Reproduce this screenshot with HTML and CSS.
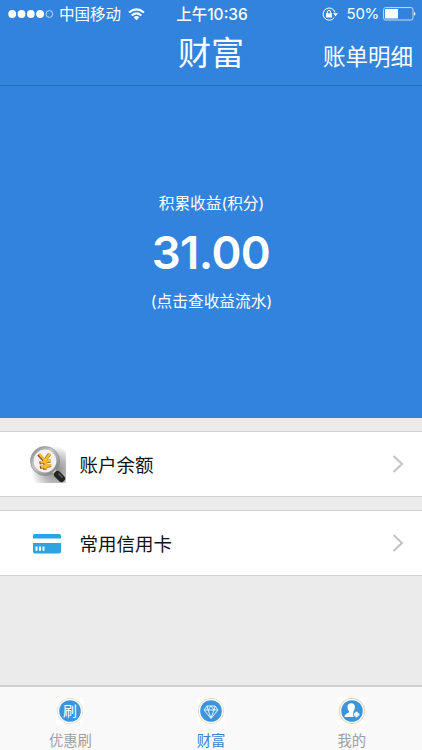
FILE: index.html
```
<!DOCTYPE html>
<html lang="zh-CN">
<head>
  <meta charset="UTF-8">
  <meta name="viewport" content="width=device-width, initial-scale=1.0">
  <title>财富</title>
  <link rel="stylesheet" href="styles.css">
</head>
<body>
  <header class="header">
    <div class="status-bar">
      <div class="status-left">
        <svg class="signal" width="46" height="10" viewBox="0 0 46 10">
          <circle cx="4.2" cy="5" r="3.9"/>
          <circle cx="13.5" cy="5" r="3.9"/>
          <circle cx="22.8" cy="5" r="3.9"/>
          <circle cx="32.1" cy="5" r="3.9"/>
          <circle cx="41.4" cy="5" r="3.4" class="signal-empty"/>
        </svg>
        <span class="carrier">中国移动</span>
        <svg class="wifi" width="17" height="13" viewBox="0 0 17 13">
          <path d="M1 4.6 Q8.5 -1.8 16 4.6 M3.7 7.4 Q8.5 3.3 13.3 7.4" fill="none" stroke="#fff" stroke-width="2"/>
          <path d="M5.6 9.2 Q8.5 6.8 11.4 9.2 L8.5 12.3z" fill="#fff"/>
        </svg>
      </div>
      <span class="time">上午10:36</span>
      <div class="status-right">
        <svg class="lock" width="17" height="14" viewBox="0 0 17 14">
          <path d="M12.3 10.5 A6.1 6.1 0 1 1 13.1 5.5" fill="none" stroke="#fff" stroke-width="1"/>
          <path d="M11 6.3h5l-2.5 3z M4 6.3h6v4.2h-6z" fill="#fff"/>
          <path d="M5.3 6.5v-1.3a1.7 1.7 0 0 1 3.4 0v1.3" fill="none" stroke="#fff" stroke-width="1"/>
        </svg>
        <span class="percent">50%</span>
        <svg width="33" height="14" viewBox="0 0 33 14">
          <rect x=".6" y=".6" width="29.4" height="12.4" rx="2" fill="none" stroke="#c5def7"/>
          <path d="M2 2h13v9.6h-13z M31 4.8q3 2 0 4z" fill="#fff"/>
        </svg>
      </div>
    </div>
    <div class="nav-bar">
      <h1>财富</h1>
      <a class="detail">账单明细</a>
    </div>
  </header>

  <section class="income">
    <p class="income-label">积累收益(积分)</p>
    <p class="income-value">31.00</p>
    <p class="income-tip">(点击查收益流水)</p>
  </section>

  <main class="list">
    <a class="row">
      <svg class="row-icon" width="38" height="38" viewBox="0 0 38 38">
        <defs>
          <radialGradient id="shade" cx=".72" cy=".68" r=".66">
            <stop offset="0" stop-color="#888"/>
            <stop offset=".5" stop-color="#bbb"/>
            <stop offset="1" stop-color="#fff"/>
          </radialGradient>
          <linearGradient id="rim" x1="0" y1="0" x2="1" y2="1">
            <stop offset="0" stop-color="#888"/>
            <stop offset=".4" stop-color="#c9c9c9"/>
            <stop offset="1" stop-color="#777"/>
          </linearGradient>
        </defs>
        <rect width="37" height="38" fill="url(#shade)"/>
        <path d="M0 0h38v8L30 0z" fill="#fff"/>
        <circle cx="16" cy="16" r="13" fill="#f3f1f2" stroke="url(#rim)" stroke-width="3.2"/>
        <circle cx="16" cy="16" r="14.6" fill="none" stroke="#888" stroke-width=".6"/>
        <path d="M9.5 9.5l6 6.5 5-7M16 16v9M10.5 18l11-2M11 22.500l11-2" fill="none" stroke="#8a451c" stroke-width="3.3"/>
        <path d="M10.5 9l5.5 6.5 5-7M16.5 15v9.500M11.5 17.5l10.5-2M12 22l10.5-2" fill="none" stroke="#f7bd32" stroke-width="2.5"/>
        <path d="M25 26l3 3" stroke="#cbc8ac" stroke-width="4"/>
        <path d="M28.500 29.500l4 4" stroke="#202423" stroke-width="7" stroke-linecap="round"/>
        <path d="M29.500 28.500l4 4" stroke="#5d6563" stroke-width="1.2"/>
      </svg>
      <span class="row-text">账户余额</span>
      <svg class="arrow" width="12" height="18" viewBox="0 0 12 18"><path d="M1.5 1l8.5 8-8.5 8"/></svg>
    </a>
    <a class="row">
      <svg class="row-icon" width="38" height="38" viewBox="0 0 38 38">
        <path d="M4 14.5V11.8q0-1.8 1.8-1.8h24.4q1.8 0 1.8 1.8V14.500zM4 19h28v8.7q0 1.8-1.8 1.8H5.8Q4 29.5 4 27.7z" fill="#2da4df"/>
        <path d="M7.5 22.5v4.2M11 22.5v4.2M14.5 22.5v4.2" stroke="#fff" stroke-width="2"/>
      </svg>
      <span class="row-text">常用信用卡</span>
      <svg class="arrow" width="12" height="18" viewBox="0 0 12 18"><path d="M1.5 1l8.5 8-8.5 8"/></svg>
    </a>
  </main>

  <nav class="tab-bar">
    <a class="tab">
      <svg width="28" height="28" viewBox="0 0 28 28">
        <rect x=".5" y=".5" width="27" height="27" fill="#fff"/>
        <circle cx="14" cy="14" r="12.7" fill="#fff" stroke="#e0e0d8"/>
        <circle cx="14" cy="14" r="10.8" fill="#3c94da"/>
        <text x="14" y="19" text-anchor="middle" class="tab-glyph">刷</text>
      </svg>
      <span>优惠刷</span>
    </a>
    <a class="tab active">
      <svg width="28" height="28" viewBox="0 0 28 28">
        <rect x=".5" y=".5" width="27" height="27" fill="#fff"/>
        <circle cx="14" cy="14" r="12.7" fill="#fff" stroke="#dddcc4"/>
        <circle cx="14" cy="14" r="10.8" fill="#3c94da"/>
        <path d="M10 9h8l3 4-7 8.5L7 13zM7 13h14M10 9l1 4 3 8 3-8 1-4M11 13l3-4 3 4" fill="none" stroke="#e4f4ff" stroke-width="1" stroke-linejoin="round"/>
      </svg>
      <span>财富</span>
    </a>
    <a class="tab">
      <svg width="28" height="28" viewBox="0 0 28 28">
        <rect x=".5" y=".5" width="27" height="27" fill="#fff"/>
        <circle cx="14" cy="14" r="12.7" fill="#fff" stroke="#d6d6aa"/>
        <circle cx="14" cy="14" r="10.8" fill="#3c94da"/>
        <path d="M6.500 20q0-3 4.500-4.500v-1.300q-2-2-1.500-5 .5-3 3.700-3t3.700 3q.4 3-1.400 5v1.300q2 .5 2 1.500v3z" fill="#fff"/>
        <path d="M18.500 14v7M15 17.500h7" stroke="#3c94da" stroke-width="4"/>
        <path d="M18.500 14.700v5.600M15.700 17.500h5.600" stroke="#fff" stroke-width="2.400"/>
      </svg>
      <span>我的</span>
    </a>
  </nav>
</body>
</html>
```
FILE: styles.css
```
* {
  box-sizing: border-box;
}
body {
  margin: 0;
  height: 750px;
  display: flex;
  flex-direction: column;
  overflow: hidden;
  background-color: #ebebeb;
  font-family: Inter, "Noto Sans CJK SC", sans-serif;
}
h1, p {
  margin: 0;
  font-weight: normal;
}
.header {
  height: 86px;
  background-color: #3183dd;
  border-bottom: 1px solid #246dbb;
  color: #fff;
}
.status-bar {
  display: grid;
  grid-template-columns: 1fr auto 1fr;
  align-items: center;
  height: 28px;
  padding: 0 6px 0 8px;
  font-size: 15.5px;
  line-height: 26px;
}
.status-left, .status-right {
  display: flex;
  align-items: center;
}
.status-right {
  justify-content: flex-end;
}
.signal {
  fill: #fff;
}
.signal .signal-empty {
  fill: none;
  stroke: #b9d8f7;
}
.carrier {
  margin-left: 5px;
  padding-top: 2px;
}
.wifi {
  margin-left: 7px;
}
.time {
  padding-top: 2px;
  font-weight: 500;
}
.lock {
  margin-right: 8px;
}
.percent {
  margin-right: 4px;
  font-size: 15px;
  letter-spacing: -0.3px;
}
.nav-bar {
  display: grid;
  grid-template-columns: 1fr auto 1fr;
  height: 57px;
  padding-right: 9px;
}
.nav-bar h1 {
  grid-column: 2;
  padding-left: 9px;
  font-size: 33px;
  line-height: 51px;
}
.detail {
  justify-self: end;
  font-size: 22.5px;
  line-height: 57px;
}
.income {
  height: 332px;
  padding-top: 102px;
  background-color: #3183dd;
  color: #fff;
  text-align: center;
}
.income-label, .income-tip {
  height: 32px;
  padding-left: 1px;
  font-size: 15.7px;
  line-height: 32px;
}
.income-value {
  height: 66px;
  font-size: 45.5px;
  font-weight: 600;
  line-height: 65px;
  letter-spacing: -0.6px;
}
.list {
  flex: 1;
  padding-top: 13px;
}
.row {
  display: flex;
  align-items: center;
  height: 66px;
  margin-bottom: 13px;
  padding: 0 18px 0 29px;
  background-color: #fff;
  border-top: 1px solid #d0d0d3;
  border-bottom: 1px solid #d0d0d3;
}
.row-text {
  flex: 1;
  margin-left: 12.5px;
  padding-top: 1px;
  font-size: 18.5px;
  line-height: 30px;
  color: #111;
}
.arrow {
  fill: none;
  stroke: #c3c3c6;
  stroke-width: 2;
}
.tab-bar {
  display: flex;
  height: 65px;
  background-color: #f9f9f9;
  border-top: 2px solid #cfcfcf;
}
.tab {
  flex: 1;
  display: flex;
  flex-direction: column;
  align-items: center;
  padding-top: 10px;
  font-size: 14.3px;
  line-height: 32px;
  color: #a0a0a0;
}
.tab svg {
  flex: none;
}
.tab.active {
  color: #3b80d2;
}
.tab-glyph {
  fill: #fff;
  font-size: 14px;
}
```
